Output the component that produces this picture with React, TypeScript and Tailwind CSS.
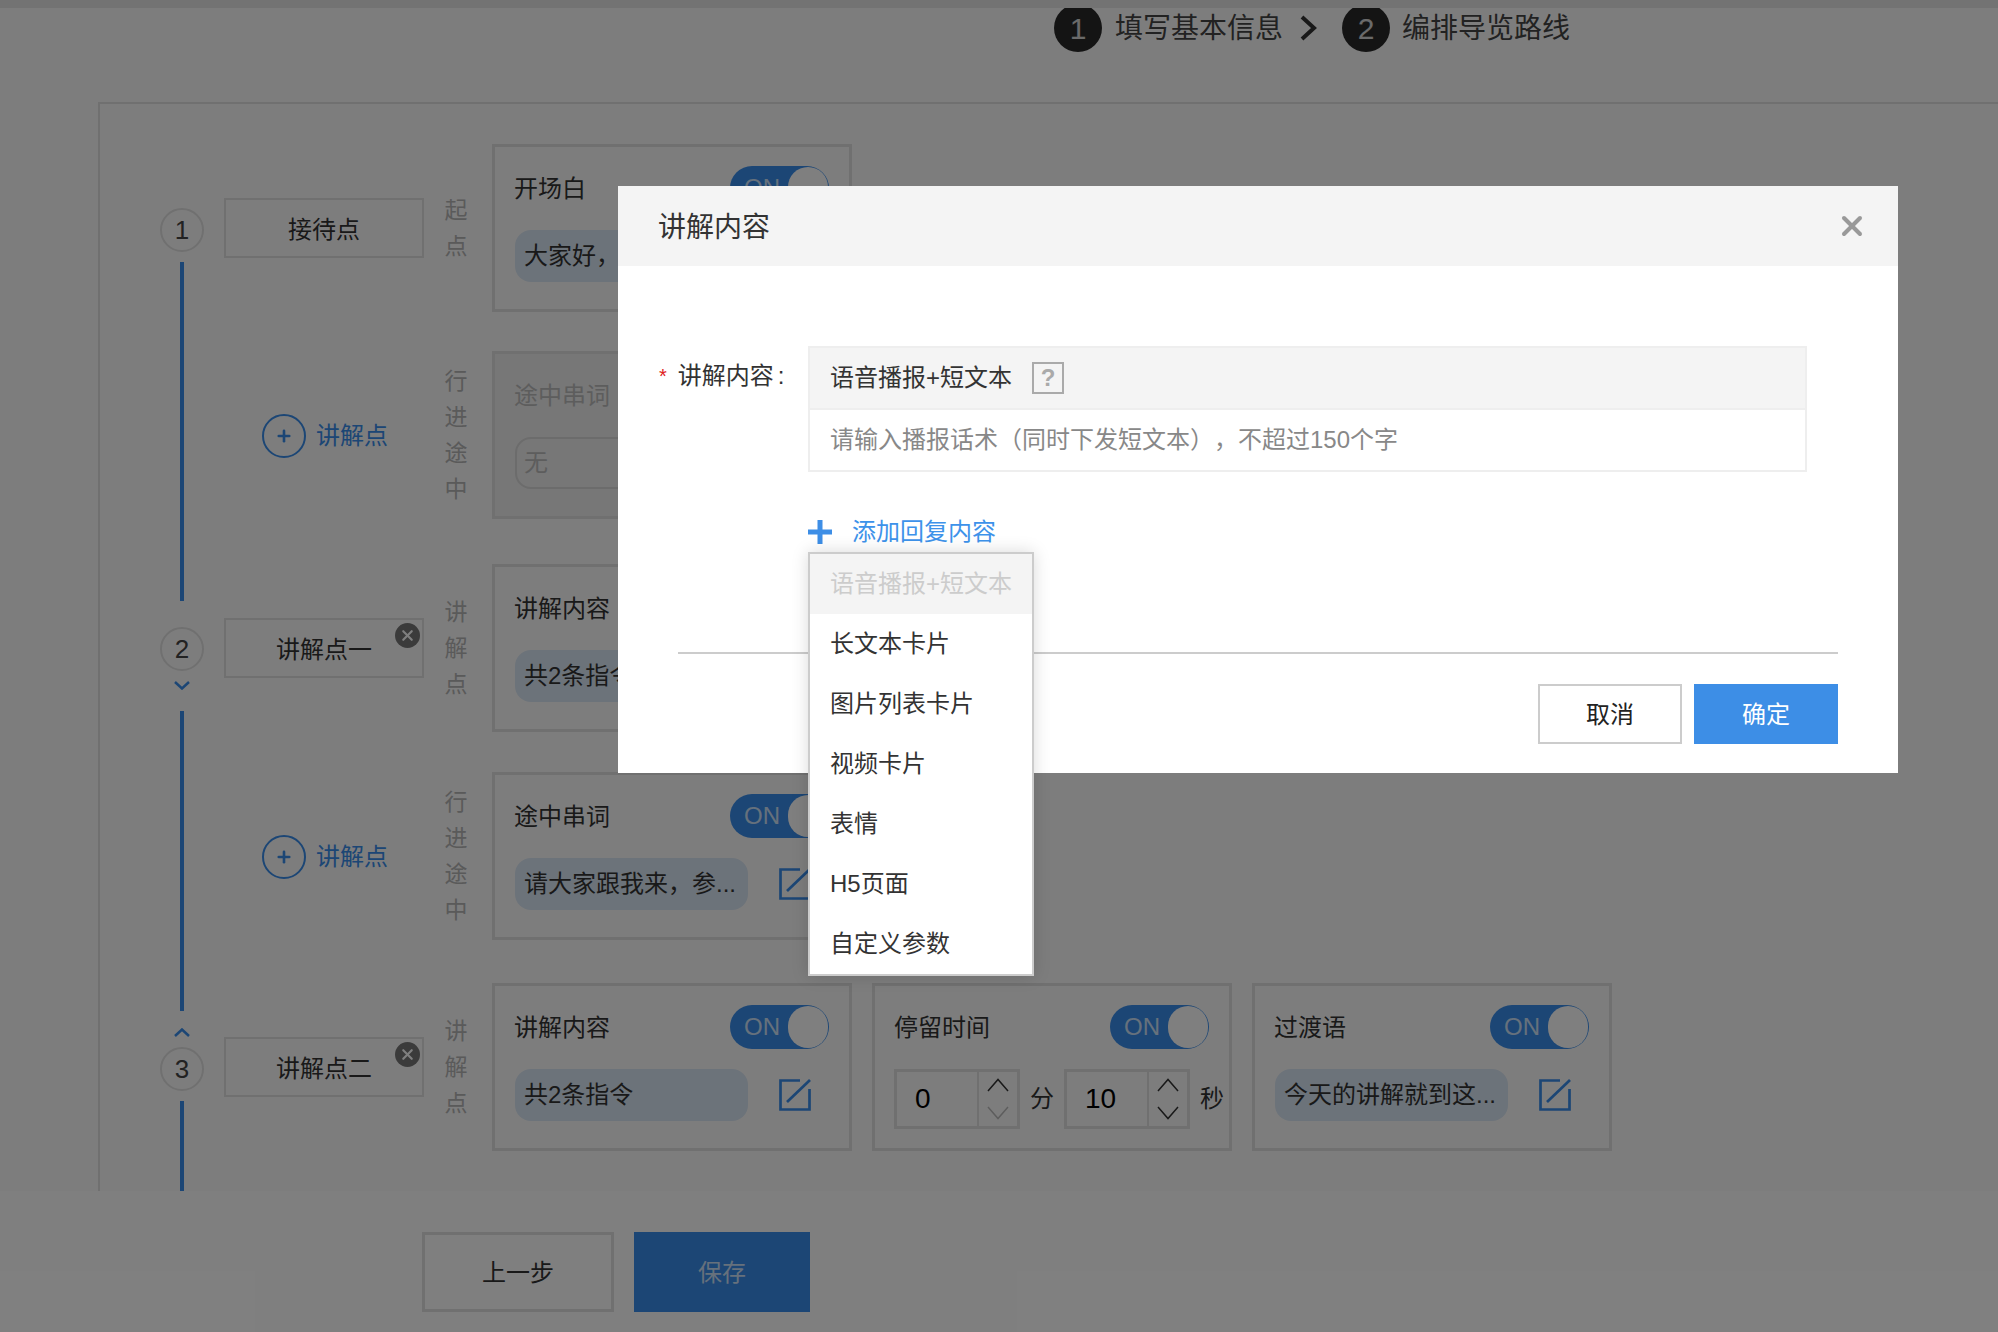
import { Plus, X } from 'lucide-react';

const font = "[font-family:'Liberation_Sans','Noto_Sans_CJK_SC',sans-serif] [text-spacing-trim:space-all]";

function VerticalLabel({ text }: { text: string }) {
  return (
    <div className="ml-[21px] mr-[25px] flex w-[22px] flex-col items-center text-[23px] leading-[36px] text-[#b4b4b4]">
      {text.split('').map((c, i) => (
        <span key={i}>{c}</span>
      ))}
    </div>
  );
}

function NameBox({ name, removable }: { name: string; removable?: boolean }) {
  return (
    <div className="relative flex h-[60px] w-[200px] items-center justify-center border-2 border-[#e0e0e0] pt-[3px] text-[24px] text-[#333]">
      {name}
      {removable && (
        <span className="absolute right-[2px] top-[3px] flex h-[25px] w-[25px] items-center justify-center rounded-full bg-[#777]">
          <X className="h-[17px] w-[17px] text-white" strokeWidth={3} />
        </span>
      )}
    </div>
  );
}

function AddPoint() {
  return (
    <div className="flex w-[200px] items-center pl-[38px] pt-[2px] text-[24px] text-[#388cea]">
      <span className="mr-[10px] flex h-[44px] w-[44px] items-center justify-center rounded-full border-2 border-[#388cea]">
        <Plus className="h-[18px] w-[18px]" strokeWidth={3.5} />
      </span>
      讲解点
    </div>
  );
}

function Toggle() {
  return (
    <div className="flex h-[44px] w-[99px] items-center justify-between rounded-full bg-[#388cea] pl-[14px] pr-[1px] text-[24px] text-white/75">
      ON
      <span className="h-[42px] w-[40px] rounded-full bg-white" />
    </div>
  );
}

function EditIcon() {
  return (
    <svg className="ml-[31px] h-[32px] w-[32px] shrink-0" viewBox="0 0 32 32" fill="none" stroke="#388cea" strokeWidth="2.7">
      <path d="M21 1.5H1.5V30.5H30.5V10" />
      <path d="M8 23L31 1" />
    </svg>
  );
}

function Card({ title, text, children }: { title: string; text?: string; children?: React.ReactNode }) {
  return (
    <div className="h-[168px] w-[360px] shrink-0 border-[3px] border-[#e0e0e0] pl-[20px] pr-[20px] pt-[19px]">
      <div className="flex h-[44px] items-center justify-between text-[24px] text-[#333]">
        <span className="-ml-[1px] pt-[1px]">{title}</span>
        <Toggle />
      </div>
      {children ?? (
        <div className="mt-[20px] flex items-center">
          <div className="flex h-[52px] w-[233px] shrink-0 items-center rounded-[16px] bg-[#d9e6f4] pl-[9px] pr-[8px] text-[24px] text-[#333]">
            {text}
          </div>
          <EditIcon />
        </div>
      )}
    </div>
  );
}

function Stepper({ value, dimDown }: { value: string; dimDown?: boolean }) {
  return (
    <div className="flex h-[60px] w-[126px] border-[3px] border-[#e0e0e0]">
      <div className="w-[80px] pl-[18px] text-[28px] leading-[54px] text-black">{value}</div>
      <div className="flex w-[40px] flex-col items-center justify-center gap-[14px] border-l-2 border-[#e0e0e0]">
        <svg width="24" height="14" viewBox="0 0 24 14" fill="none" stroke="#333" strokeWidth="1.5">
          <path d="M2 13L12 1.5L22 13" />
        </svg>
        <svg width="24" height="14" viewBox="0 0 24 14" fill="none" stroke={dimDown ? '#bbb' : '#333'} strokeWidth="1.5">
          <path d="M2 1L12 12.5L22 1" />
        </svg>
      </div>
    </div>
  );
}

function TimelineCircle({ n }: { n: number }) {
  return (
    <div className="flex h-[44px] w-[44px] shrink-0 items-center justify-center rounded-full border-2 border-[#e0e0e0] text-[26px] text-[#444]">
      {n}
    </div>
  );
}

function Chevron({ up }: { up?: boolean }) {
  return (
    <svg className="shrink-0" width="16" height="9" viewBox="0 0 16 9" fill="none" stroke="#388cea" strokeWidth="2.5">
      <path d={up ? 'M1 8L8 1.5L15 8' : 'M1 1L8 7.5L15 1'} />
    </svg>
  );
}

const dropdownItems = ['长文本卡片', '图片列表卡片', '视频卡片', '表情', 'H5页面', '自定义参数'];

export default function App() {
  return (
    <div className={`relative flex h-[1332px] w-[1998px] flex-col overflow-hidden bg-white ${font}`}>
      <div className="relative z-10 h-2 shrink-0 bg-[#e6e6e6]" />

      {/* steps */}
      <div className="-mt-1 flex h-[98px] shrink-0 bg-[#fbfbfb] pl-[1054px] text-[28px] text-[#444]">
        <div className="flex h-[48px] items-center">
          <span className="flex h-[48px] w-[48px] items-center justify-center rounded-full bg-[#282828] text-[30px] text-white/80">1</span>
          <span className="ml-[13px] pt-[2px]">填写基本信息</span>
          <svg className="ml-[16px] mr-[25px]" width="18" height="26" viewBox="0 0 18 26" fill="none" stroke="#333" strokeWidth="4">
            <path d="M3 2L15 13L3 24" />
          </svg>
          <span className="flex h-[48px] w-[48px] items-center justify-center rounded-full bg-[#282828] text-[30px] text-white/80">2</span>
          <span className="ml-[12px] pt-[2px]">编排导览路线</span>
        </div>
      </div>

      {/* route editor */}
      <div className="h-[1089px] shrink-0 overflow-hidden bg-[#fbfbfb] pl-[98px]">
        <div className="flex h-[1200px] border-l-2 border-t-2 border-[#e0e0e0]">
          <div className="ml-[60px] mr-[20px] flex w-[44px] shrink-0 flex-col items-center pt-[104px]">
            <TimelineCircle n={1} />
            <div className="mt-[10px] h-[339px] w-[4px] shrink-0 bg-[#388cea]" />
            <div className="mt-[26px]">
              <TimelineCircle n={2} />
            </div>
            <div className="mt-[10px] flex">
              <Chevron />
            </div>
            <div className="mt-[21px] h-[300px] w-[4px] shrink-0 bg-[#388cea]" />
            <div className="mt-[17px] flex">
              <Chevron up />
            </div>
            <div className="mt-[10px]">
              <TimelineCircle n={3} />
            </div>
            <div className="mt-[10px] h-[120px] w-[4px] shrink-0 bg-[#388cea]" />
          </div>

          <div className="flex flex-col pt-[40px]">
            <div className="flex items-center">
              <NameBox name="接待点" />
              <VerticalLabel text="起点" />
              <Card title="开场白" text="大家好，" />
            </div>
            <div className="mt-[39px] flex items-center">
              <AddPoint />
              <VerticalLabel text="行进途中" />
              <div className="h-[168px] w-[360px] shrink-0 border-[3px] border-[#e0e0e0] bg-[#eeeeee] pl-[20px] pt-[19px] text-[24px] text-[#bbb]">
                <div className="-ml-[1px] flex h-[44px] items-center pt-[1px]">途中串词</div>
                <div className="mt-[20px] flex h-[52px] w-[233px] items-center rounded-[16px] border-2 border-[#d8d8d8] px-[7px]">无</div>
              </div>
            </div>
            <div className="mt-[45px] flex items-center">
              <NameBox name="讲解点一" removable />
              <VerticalLabel text="讲解点" />
              <Card title="讲解内容" text="共2条指令" />
            </div>
            <div className="mt-[40px] flex items-center">
              <AddPoint />
              <VerticalLabel text="行进途中" />
              <Card title="途中串词" text="请大家跟我来，参..." />
            </div>
            <div className="mt-[43px] flex items-center">
              <NameBox name="讲解点二" removable />
              <VerticalLabel text="讲解点" />
              <div className="flex gap-[20px]">
                <Card title="讲解内容" text="共2条指令" />
                <Card title="停留时间">
                  <div className="-ml-[1px] mt-[20px] flex items-center text-[24px] text-[#333]">
                    <Stepper value="0" dimDown />
                    <span className="ml-[10px] mr-[10px]">分</span>
                    <Stepper value="10" />
                    <span className="ml-[10px]">秒</span>
                  </div>
                </Card>
                <Card title="过渡语" text="今天的讲解就到这..." />
              </div>
            </div>
          </div>
        </div>
      </div>

      {/* footer */}
      <div className="flex flex-1 gap-[20px] bg-white pl-[422px] pt-[41px] text-[24px]">
        <div className="flex h-[80px] w-[192px] items-center justify-center border-[3px] border-[#e0e0e0] pt-[2px] text-[#333]">上一步</div>
        <div className="flex h-[80px] w-[176px] items-center justify-center bg-[#388cea] pt-[2px] text-white/75">保存</div>
      </div>

      {/* dialog backdrop */}
      <div className="absolute inset-0 z-20 bg-black/50" />

      <div className="absolute left-[618px] top-[186px] z-30 h-[587px] w-[1280px] bg-white text-[24px] text-[#333]">
        <div className="flex h-[80px] items-center justify-between bg-[#f4f4f4] pl-[40px] pr-[30px]">
          <span className="pt-[3px] text-[28px]">讲解内容</span>
          <X className="h-[32px] w-[32px] text-[#999]" strokeWidth={3} />
        </div>

        <div className="flex pl-[41px] pt-[80px]">
          <div className="flex w-[149px] shrink-0 items-start pt-[4px] leading-[52px]">
            <span className="mr-[11px] text-[20px] text-[#e02020]">*</span>
            讲解内容<span className="ml-[4px]">:</span>
          </div>
          <div className="w-[999px]">
            <div className="border-2 border-[#eeeeee]">
              <div className="flex h-[60px] items-center bg-[#f4f4f4] pl-[20px]">
                语音播报+短文本
                <span className="ml-[20px] flex h-[32px] w-[32px] items-center justify-center border-2 border-[#aaa] text-[24px] font-bold text-[#aaa]">?</span>
              </div>
              <div className="flex h-[62px] items-center border-t-2 border-[#eeeeee] pl-[20px] text-[#888]">
                请输入播报话术（同时下发短文本），不超过150个字
              </div>
            </div>

            <div className="relative mt-[47px] flex h-[26px] items-center text-[#3d92ea]">
              <svg className="mr-[20px]" width="24" height="24" viewBox="0 0 24 24" fill="#3d8ee6">
                <path d="M9.5 0H14.5V9.5H24V14.5H14.5V24H9.5V14.5H0V9.5H9.5Z" />
              </svg>
              添加回复内容
              <div className="absolute left-0 top-[33px] z-40 w-[226px] border-2 border-[#cccccc] bg-white text-[#333] shadow-[0_0_16px_rgba(0,0,0,0.15)]">
                <div className="flex h-[60px] items-center bg-[#f4f4f4] pl-[20px] text-[#ccc]">语音播报+短文本</div>
                {dropdownItems.map((item) => (
                  <div key={item} className="flex h-[60px] items-center pl-[20px]">
                    {item}
                  </div>
                ))}
              </div>
            </div>
          </div>
        </div>

        <div className="ml-[60px] mt-[107px] h-[2px] w-[1160px] bg-[#cccccc]" />

        <div className="mr-[60px] mt-[30px] flex justify-end gap-[12px]">
          <div className="flex h-[60px] w-[144px] items-center justify-center border-2 border-[#cccccc] pt-[2px] text-[#222]">取消</div>
          <div className="flex h-[60px] w-[144px] items-center justify-center bg-[#3d8ee6] pt-[2px] text-white">确定</div>
        </div>
      </div>
    </div>
  );
}
